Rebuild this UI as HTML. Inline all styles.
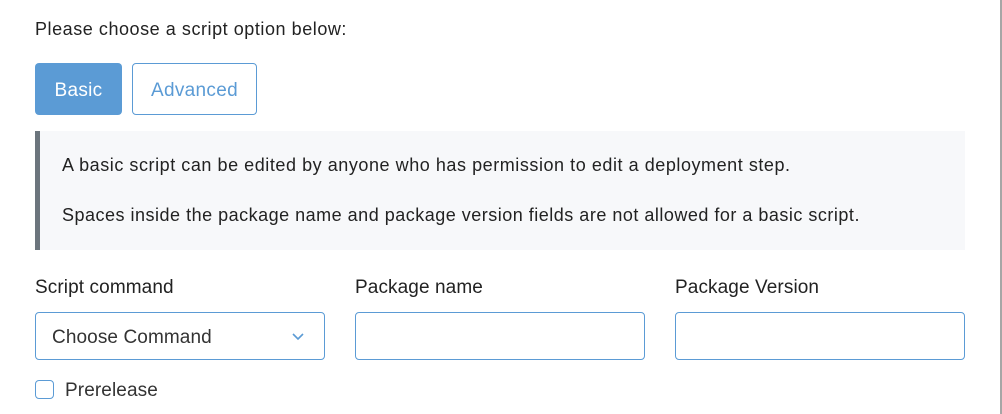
<!DOCTYPE html>
<html><head><style>
body{margin:0;width:1002px;height:414px;background:#fff;font-family:"Liberation Sans",sans-serif;color:#222;font-size:18px;letter-spacing:0.55px;position:relative;overflow:hidden}
.a{position:absolute;white-space:nowrap}
.btn{position:absolute;top:63px;height:52px;box-sizing:border-box;border-radius:4px;display:flex;align-items:center;justify-content:center;font-size:19px;letter-spacing:0.3px;padding-top:3px}
.inp{position:absolute;top:312px;height:48px;width:290px;box-sizing:border-box;border:1px solid #5b9bd5;border-radius:4px}
.l{font-size:19px;letter-spacing:0.1px}
</style></head><body>
<div style="position:absolute;right:0;top:0;width:2px;height:414px;background:#a6a6a6"></div>
<div class="a" style="left:35px;top:19px">Please choose a script option below:</div>
<div class="btn" style="left:35px;width:87px;background:#5b9bd5;color:#fff">Basic</div>
<div class="btn" style="left:132px;width:125px;border:1px solid #5b9bd5;color:#5b9bd5">Advanced</div>
<div style="position:absolute;left:35px;top:131px;width:930px;height:119px;background:#f7f8fa;border-left:5px solid #6c757d;box-sizing:border-box"></div>
<div class="a" style="left:62px;top:155px">A basic script can be edited by anyone who has permission to edit a deployment step.</div>
<div class="a" style="left:62px;top:205px;letter-spacing:0.5px">Spaces inside the package name and package version fields are not allowed for a basic script.</div>
<div class="a l" style="left:35px;top:277px">Script command</div>
<div class="a l" style="left:355px;top:277px">Package name</div>
<div class="a l" style="left:675px;top:277px">Package Version</div>
<div class="inp" style="left:35px"><span class="a l" style="left:16px;top:14px;color:#333">Choose Command</span>
<svg class="a" style="left:255px;top:19px" width="14" height="10" viewBox="0 0 14 10"><path d="M2 2l5 5 5-5" fill="none" stroke="#5b9bd5" stroke-width="1.6"/></svg></div>
<div class="inp" style="left:355px"></div>
<div class="inp" style="left:675px"></div>
<div style="position:absolute;left:35px;top:380px;width:19px;height:19px;box-sizing:border-box;border:1px solid #5b9bd5;border-radius:4px"></div>
<div class="a l" style="left:65px;top:380px;color:#333">Prerelease</div>
</body></html>
